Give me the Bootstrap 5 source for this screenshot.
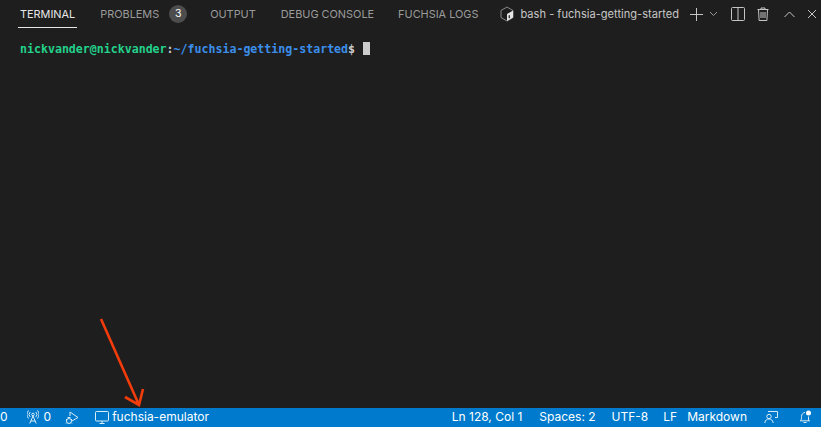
<!DOCTYPE html>
<html lang="en">
<head>
<meta charset="utf-8">
<title>Terminal</title>
<link href="https://cdn.jsdelivr.net/npm/bootstrap@5.3.0/dist/css/bootstrap.min.css" rel="stylesheet">
<style>
html,body{height:100%;margin:0;overflow:hidden;background:#1e1e1e}
body{font-family:Inter,"Liberation Sans",sans-serif}
.shell{width:821px;height:427px}
.panelbar{height:28px;font-size:10.9px;color:#9b9b9b;padding-left:20px}
.tabitem{height:27px;line-height:27px;white-space:nowrap}
.tabitem.on{color:#e7e7e7;box-shadow:inset 0 -1px 0 #e7e7e7;margin-left:-2px;padding:0 2px}
.tab-problems{margin-left:23px}
.tab-output{margin-left:23px}
.tab-debug{margin-left:25px}
.tab-logs{margin-left:24px}
.countbadge{width:18px;height:18px;border-radius:50%;background:#4d4d4d;color:#fff;font-size:10.5px;line-height:18px;text-align:center;margin-left:10px}
.shellname{font-size:11.1px;color:#c6c6c6;white-space:nowrap;margin-left:6px}
.panelbar svg,.statusline svg{display:block;flex:none}
.ic-bash{margin-left:22px}
.ic-plus{margin-left:11px}
.ic-chev{margin-left:6px}
.ic-split{margin-left:13px}
.ic-trash{margin-left:12px}
.ic-up{margin-left:15px}
.ic-close{margin-left:12px}
.termarea{font-family:"DejaVu Sans Mono",monospace;font-weight:700;font-size:11.6px;padding:14px 0 0 20px;line-height:14px;white-space:pre}
.tgreen{color:#23d18b}
.tblue{color:#3b8eea}
.tgrey{color:#cccccc}
.cursorblock{display:inline-block;width:7px;height:13px;background:#cccccc;margin-left:8px;vertical-align:-2px}
.statusline{height:19.500px;background:#007acc;color:#fff;font-size:12px;white-space:nowrap;padding-right:9px}
.ic-radio{margin-left:19px}
.gap-zero{margin-left:5px}
.ic-debug{margin-left:14px}
.ic-monitor{margin-left:16px}
.target-name{margin-left:3px}
.st-spaces{margin-left:17px}
.st-enc{margin-left:16px}
.st-eol{margin-left:15px}
.st-lang{margin-left:10px}
.ic-feedback{margin-left:17px}
.ic-bell{margin-left:20px}
.pointer{position:absolute;left:0;top:0;pointer-events:none}
</style>
</head>
<body>
<div class="shell d-flex flex-column position-relative">
  <div class="panelbar d-flex align-items-center">
    <div class="tabitem on">TERMINAL</div>
    <div class="tabitem d-flex align-items-center tab-problems">PROBLEMS<span class="countbadge">3</span></div>
    <div class="tabitem tab-output">OUTPUT</div>
    <div class="tabitem tab-debug">DEBUG CONSOLE</div>
    <div class="tabitem tab-logs">FUCHSIA LOGS</div>
    <svg class="ic-bash" width="14" height="16" viewBox="0 0 14 16" fill="none"><path d="M7 1 13 4.500V11.500L7 15 1 11.500V4.500Z" stroke="#8a8a8a" stroke-width="1"/><path d="M7 8 13 4.500V11.500L7 15Z" fill="#e6e6e6"/><rect x="8.600" y="9.200" width="1.400" height="3" fill="#333"/></svg>
    <div class="shellname">bash - fuchsia-getting-started</div>
    <svg class="ic-plus" width="13" height="13" viewBox="0 0 13 13"><path d="M6.500 0v13M0 6.500h13" stroke="#c5c5c5" stroke-width="1"/></svg>
    <svg class="ic-chev" width="9" height="6" viewBox="0 0 9 6" fill="none"><path d="M1 1l3.500 3.500L8 1" stroke="#9a9a9a"/></svg>
    <svg class="ic-split" width="14" height="14" viewBox="0 0 14 14" fill="none"><rect x=".5" y=".5" width="13" height="13" rx="1" stroke="#c5c5c5"/><path d="M7 .5v13" stroke="#c5c5c5"/></svg>
    <svg class="ic-trash" width="12" height="14" viewBox="0 0 12 14" fill="none" stroke="#c5c5c5"><path d="M.5 2.500h11M4 2.500V1h4v1.500M1.500 2.500l.6 11h7.800l.6-11M4 5v6M6 5v6M8 5v6"/></svg>
    <svg class="ic-up" width="11" height="7" viewBox="0 0 11 7" fill="none"><path d="M.5 6 5.500 1l5 5" stroke="#c5c5c5"/></svg>
    <svg class="ic-close" width="10" height="10" viewBox="0 0 10 10" fill="none"><path d="M1 1l8 8M9 1l-8 8" stroke="#c5c5c5"/></svg>
  </div>
  <div class="termarea flex-grow-1"><span class="tgreen">nickvander@nickvander</span><span class="tgrey">:</span><span class="tblue">~/fuchsia-getting-started</span><span class="tgrey">$</span><span class="cursorblock"></span></div>
  <div class="statusline d-flex align-items-center">
    <span>0</span>
    <svg class="ic-radio" width="12" height="14" viewBox="0 0 12 14" fill="none" stroke="#d9edf9"><path d="M6 6 2.800 13.500M6 6l3.200 7.500M3.800 11h4.400"/><circle cx="6" cy="4.500" r="1.300"/><path d="M3.200 7a3.500 3.500 0 0 1 0-5M8.800 2a3.500 3.500 0 0 1 0 5M1.500 8.500a6 6 0 0 1 0-8M10.500 .5a6 6 0 0 1 0 8"/></svg>
    <span class="gap-zero">0</span>
    <svg class="ic-debug" width="14" height="15" viewBox="0 0 14 15" fill="none" stroke="#d9edf9"><path d="M5 2 13 7.500 7 11"/><path d="M5 2v4"/><circle cx="4" cy="11" r="2.500"/><path d="M1 9l1 1M7 9l-1 1M1 13.500l1-1M7 13.500l-1-1M2.500 7.500h3"/></svg>
    <svg class="ic-monitor" width="14" height="13" viewBox="0 0 14 13" fill="none" stroke="#d9edf9"><rect x=".5" y=".5" width="13" height="9.500" rx="1"/><path d="M4.500 12.500h5M7 10v2.500"/></svg>
    <span class="target-name">fuchsia-emulator</span>
    <span class="ms-auto">Ln 128, Col 1</span>
    <span class="st-spaces">Spaces: 2</span>
    <span class="st-enc">UTF-8</span>
    <span class="st-eol">LF</span>
    <span class="st-lang">Markdown</span>
    <svg class="ic-feedback" width="14" height="14" viewBox="0 0 14 14" fill="none" stroke="#d9edf9"><path d="M4 1.500h9.500v6H11"/><circle cx="5" cy="6.500" r="2.200"/><path d="M.8 13c.5-3 2-4 4.200-4s3.700 1 4.200 4"/></svg>
    <svg class="ic-bell" width="14" height="14" viewBox="0 0 14 14" fill="none"><path d="M2.500 10.500c1-1 1-2 1-4 0-2 1.500-4 3.500-4M2 10.800h10M5.500 12.500h3" stroke="#d9edf9"/><path d="M10.500 6.500v4.300" stroke="#d9edf9"/><circle cx="10.500" cy="3" r="2.500" fill="#fff"/></svg>
  </div>
  <svg class="pointer" width="821" height="427" viewBox="0 0 821 427" fill="none" stroke="#f23c0c" stroke-width="2.600"><path d="M101 319 139 405M125 397 139 405 143 389"/></svg>
</div>
<script src="https://cdn.jsdelivr.net/npm/bootstrap@5.3.0/dist/js/bootstrap.bundle.min.js"></script>
</body>
</html>
